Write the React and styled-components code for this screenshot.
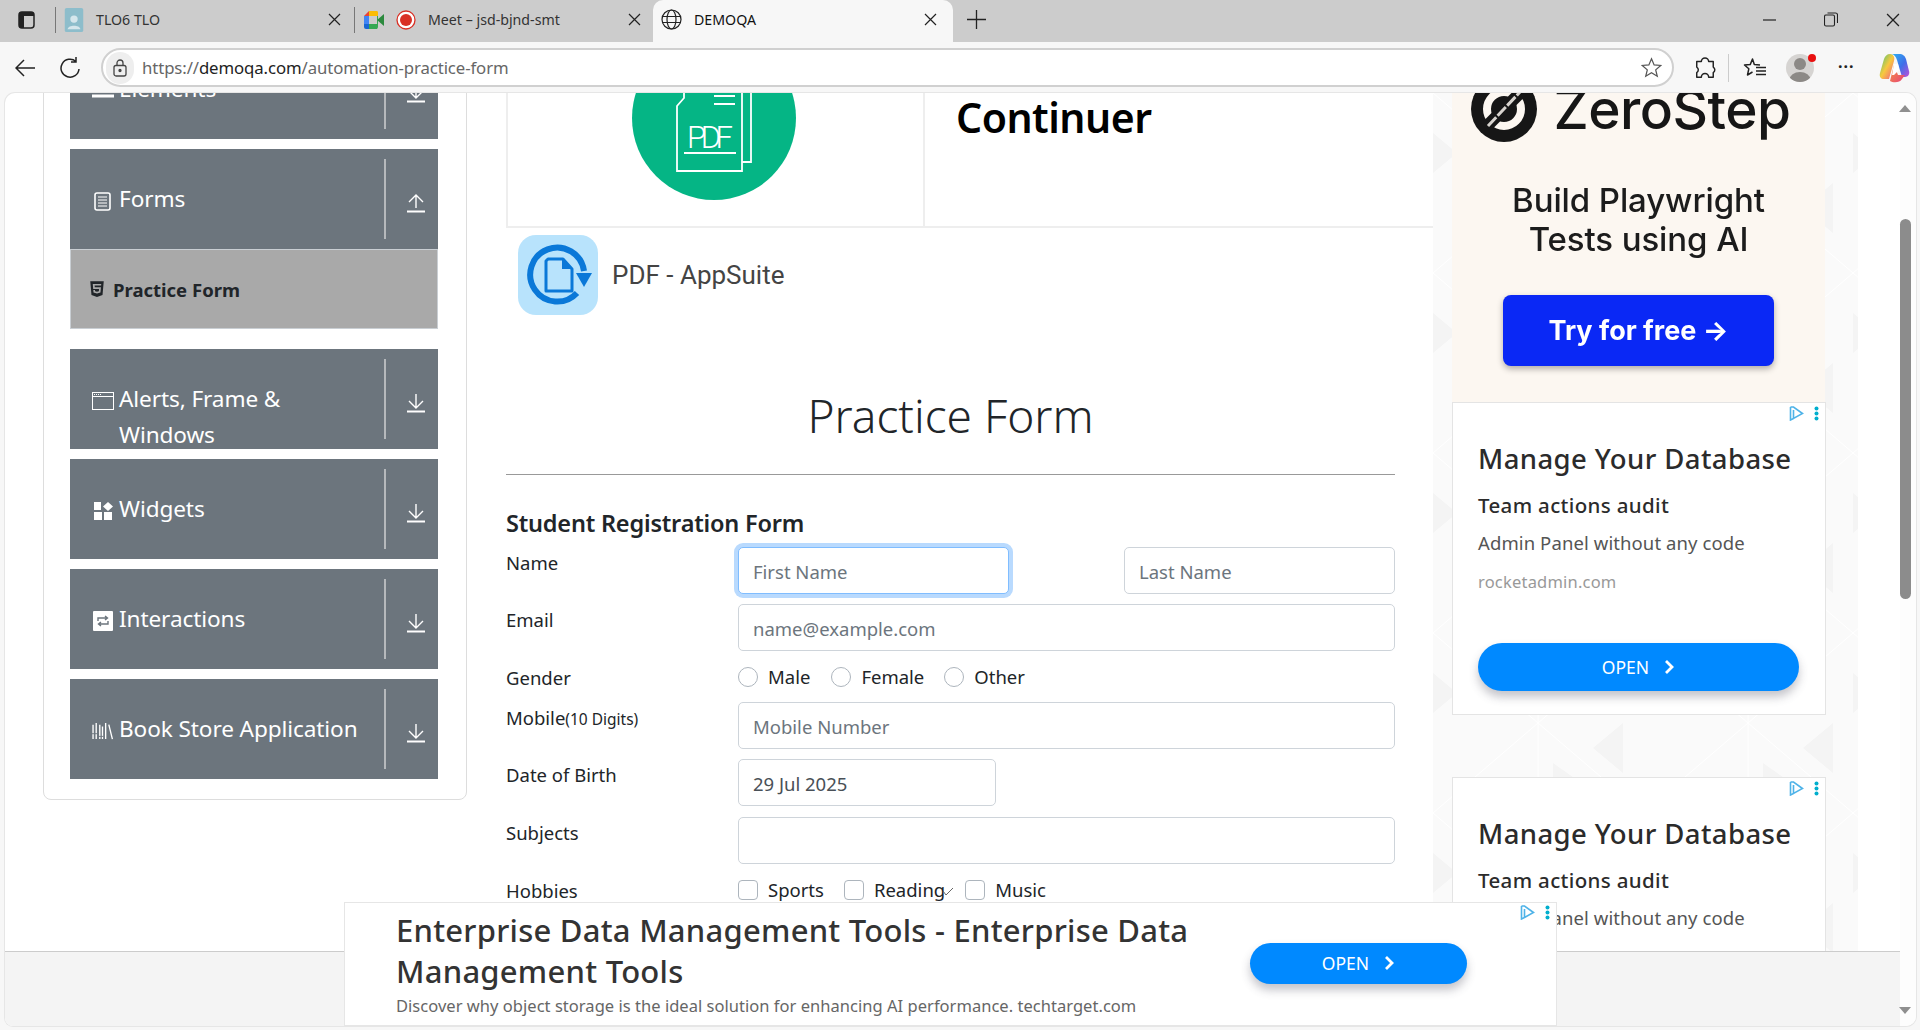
import React from 'react';
import styled, { createGlobalStyle } from 'styled-components';
import { FaHtml5 } from 'react-icons/fa';

const UI = '"Noto Sans", "Open Sans", sans-serif';
const AD = '"Noto Sans", Roboto, sans-serif';

const Global = createGlobalStyle`
  html, body { margin: 0; height: 100%; overflow: hidden; background: #f7f7f7; }
  * { box-sizing: border-box; }
  #root { height: 100%; }
  body { font-family: ${UI}; }
`;

const Window = styled.div`display:flex;flex-direction:column;width:1920px;height:1030px;background:#f7f7f7;`;
const TabStrip = styled.div`height:42px;background:#ccc;display:flex;align-items:center;flex:none;`;
const Tab = styled.div`
  display:flex;align-items:center;height:42px;position:relative;font:14.2px ${UI};color:${p=>p.$active?'#111':'#333'};
  width:${p=>p.$w}px;padding:0 0 3px ${p=>p.$pl}px;flex:none;
  background:${p=>p.$active?'#f7f7f7':'transparent'};
  border-radius:${p=>p.$active?'10px 10px 0 0':'0'};
`;
const TabSep = styled.i`width:1px;height:26px;background:#777;flex:none;margin-bottom:3px;`;
const TabText = styled.span`margin-left:${p=>p.$ml}px;flex:1;white-space:nowrap;`;
const TabClose = styled.span`display:flex;flex:none;margin-right:${p=>p.$mr}px;`;
const StripIcon = styled.span`display:flex;flex:none;margin-left:${p=>p.$ml||0}px;margin-bottom:${p=>p.$mb||0}px;`;
const WinControls = styled.div`display:flex;margin-left:auto;align-items:center;gap:48px;padding:0 20px 3px 0;`;
const Toolbar = styled.div`height:51px;flex:none;display:flex;align-items:center;padding:0 11px 0 15px;`;
const NavIcon = styled.span`display:flex;flex:none;margin-right:${p=>p.$mr}px;`;
const Omnibox = styled.div`
  height:39px;width:1573px;border:2px solid #d0d0d0;border-radius:20px;background:#fff;display:flex;align-items:center;
  padding:0 10px 0 3px;flex:none;margin-right:20px;
`;
const LockPill = styled.span`width:28px;height:32px;border-radius:14px;background:#eee;display:flex;align-items:center;justify-content:center;flex:none;`;
const Url = styled.span`margin-left:8px;font:16.75px ${UI};color:#666;flex:1;letter-spacing:-.1px;white-space:nowrap;b{font-weight:400;color:#222;}`;
const ToolIcons = styled.div`display:flex;align-items:center;`;
const ToolSep = styled.i`width:1px;height:28px;background:#ccc;margin:0 14px 0 12px;`;
const Avatar = styled.span`width:28px;height:28px;margin:0 24px 0 19px;border-radius:50%;background:#d6d4d2;position:relative;overflow:hidden;display:block;`;
const AvatarWrap = styled.span`position:relative;display:flex;`;
const Dot = styled.i`position:absolute;top:0;left:41px;width:8px;height:8px;border-radius:50%;background:#e81010;`;
const More = styled.span`font:700 16px ${UI};color:#222;margin-right:24px;letter-spacing:1px;transform:translateY(-2px);`;

const Page = styled.div`
  flex:none;margin-left:5px;width:1911px;height:933px;background:#fff;border-radius:10px 10px 10px 8px;overflow:hidden;position:relative;
  box-shadow:0 0 0 1px #e6e6e6;
`;
const Scroll = styled.div`display:flex;align-items:flex-start;padding-left:38px;height:100%;`;

const Card = styled.nav`
  width:424px;flex:none;margin-top:-80px;padding:25px 28px 20px 26px;border:1px solid #ddd;border-radius:8px;background:#fff;
`;
const Item = styled.div`
  height:100px;background:#6c757d;display:flex;margin-bottom:${p=>p.$mb}px;overflow:hidden;color:#fff;
`;
const ItemLabel = styled.div`flex:1;display:flex;padding:32px 12px 0 21px;min-width:0;font:22.6px/36px ${UI};letter-spacing:-.1px;`;
const IconSlot = styled.span`width:23px;height:36px;flex:none;display:flex;align-items:center;justify-content:center;margin-right:5px;transform:translateY(2px);`;
const ItemDivider = styled.i`width:2px;height:80px;margin-top:10px;background:#b6b9bc;flex:none;`;
const ArrowBox = styled.span`width:52px;flex:none;display:flex;padding:44px 0 0 21px;`;
const SubItem = styled.div`
  height:80px;background:#a9a9a9;border:1px solid #c9ced3;display:flex;align-items:center;padding-left:17px;margin-bottom:20px;
  font:700 18.5px ${UI};color:#212529;gap:7px;
`;

const Middle = styled.main`width:928px;flex:none;margin-left:38px;`;
const AdTable = styled.div`height:135px;display:grid;grid-template-columns:417px 1fr;border-left:2px solid #eee;border-bottom:2px solid #eee;margin-left:1px;overflow:hidden;`;
const AdImageCell = styled.div`border-right:2px solid #eee;display:flex;justify-content:center;`;
const Continuer = styled.div`font:600 41px/48px ${UI};color:#000;padding-left:31px;letter-spacing:-.5px;`;
const AppRow = styled.div`display:flex;align-items:center;margin:7px 0 0 13px;gap:14px;font:26px Roboto, sans-serif;color:#444;`;
const FormWrap = styled.section`width:889px;margin-left:1px;`;
const Title = styled.h1`margin:65px 0 0;text-align:center;font:300 46px/70px ${UI};color:#212529;height:95px;border-bottom:1px solid #999;`;
const SubTitle = styled.h2`margin:30px 0 0;font:600 23.5px/36px ${UI};color:#212529;letter-spacing:-.2px;height:42px;`;
const Row = styled.div`display:grid;grid-template-columns:232px 1fr;margin-bottom:${p=>p.$mb ?? 10}px;min-height:${p=>p.$h||47}px;`;
const Label = styled.label`font:18.5px/24px ${UI};color:#212529;padding-top:${p=>p.$pt ?? 4}px;white-space:nowrap;small{font-size:15.5px;}`;
const Fields = styled.div`display:flex;justify-content:space-between;`;
const Input = styled.input`
  display:block;height:47px;width:${p=>p.$w||'100%'};padding:2px 14px 0;border:1px solid ${p=>p.$focus?'#80bdff':'#ced4da'};border-radius:5px;
  font:18.5px ${UI};color:#495057;background:#fff;outline:none;
  box-shadow:${p=>p.$focus?'0 0 0 4px #b9dafe':'none'};
  &::placeholder{color:#6c757d;opacity:1;}
`;
const Choices = styled.div`display:flex;align-items:center;`;
const Choice = styled.label`display:flex;align-items:center;font:18.5px/24px ${UI};color:#212529;margin-right:${p=>p.$mr}px;gap:10px;white-space:nowrap;`;
const Mark = styled.input`
  appearance:none;margin:0;width:20px;height:20px;background:#fff;border:1px solid #adb5bd;flex:none;
  border-radius:${p=>p.type==='radio'?'50%':'4px'};
`;
const Tick = styled.svg`margin:4px 0 0 -13px;position:relative;`;

const Right = styled.aside`
  width:425px;flex:none;margin-left:0;padding:0 33px 0 19px;height:100%;background-color:#fafafa;
  background-image:url("data:image/svg+xml,%3Csvg xmlns='http://www.w3.org/2000/svg' width='210' height='180'%3E%3Cg fill='%23f4f4f4'%3E%3Cpath d='M0 40l24 20-24 20zM70 10l40 30H70zM190 90l-30 25 30 25zM120 130l34 24-34 24z'/%3E%3C/g%3E%3Cg stroke='%23fff' fill='none'%3E%3Cpath d='M0 0l105 90L210 0M0 180l105-90 105 90M105 0v180'/%3E%3C/g%3E%3C/svg%3E");
`;
const Promo = styled.div`
  height:309px;background:#fcf7f1;display:flex;flex-direction:column;align-items:center;overflow:hidden;font-family:Inter,sans-serif;color:#1c1c1c;filter:blur(.35px);
`;
const PromoLogo = styled.div`display:flex;align-items:center;height:50px;margin:-9px 15px 0 0;gap:16px;font:500 55px/60px Inter,sans-serif;color:#161616;letter-spacing:-.5px;`;
const PromoText = styled.div`margin-top:47px;font:500 33px/39px Inter,sans-serif;text-align:center;letter-spacing:-.1px;`;
const PromoBtn = styled.div`
  margin-top:36px;width:271px;height:71px;border-radius:8px;background:#0a28f5;color:#fff;font:700 27px/71px Inter,sans-serif;text-align:center;
  box-shadow:0 3px 6px rgba(0,0,0,.3);
`;
const AdBox = styled.div`
  position:relative;height:${p=>p.$h}px;width:374px;background:#fff;border:1px solid #e4e4e4;padding:38px 26px 0 25px;margin-bottom:${p=>p.$mb}px;overflow:hidden;
`;
const AdMark = styled.span`position:absolute;top:${p=>p.$top ?? 3}px;right:6px;display:flex;gap:10px;`;
const AdTitle = styled.div`font:500 27.5px/36px ${AD};color:#2b2b2b;white-space:nowrap;letter-spacing:.4px;`;
const AdSub = styled.div`font:500 20.5px/28px ${AD};color:#2b2b2b;margin-top:14px;letter-spacing:.35px;`;
const AdBody = styled.div`font:18.5px/28px ${AD};color:#555;margin-top:10px;letter-spacing:.1px;white-space:nowrap;`;
const AdLink = styled.div`font:16.5px/24px ${AD};color:#999;margin-top:13px;letter-spacing:.2px;`;
const OpenBtn = styled.div`
  width:${p=>p.$w}px;height:${p=>p.$h}px;border-radius:24px;background:#0089ff;color:#fff;display:flex;align-items:center;justify-content:center;gap:15px;
  font:17.5px ${AD};box-shadow:0 6px 10px rgba(60,60,80,.3);flex:none;margin-top:${p=>p.$mt ?? 0}px;
`;
const TrackBar = styled.div`position:absolute;right:0;top:0;bottom:0;width:16px;background:#fdfdfd;display:flex;flex-direction:column;align-items:center;`;
const Thumb = styled.i`display:block;width:11px;height:380px;margin:126px 5px 0 0;border-radius:6px;background:#8c8c8c;`;
const UpArrow = styled.i`position:absolute;top:12px;left:-1px;border:6.500px solid transparent;border-top:0;border-bottom:7px solid #8f8f8f;`;
const DownArrow = styled.i`position:absolute;bottom:12px;left:-1px;border:6.500px solid transparent;border-bottom:0;border-top:7px solid #8f8f8f;`;
const FooterBar = styled.div`position:absolute;left:0;right:10px;bottom:0;height:75px;background:#f4f4f4;border-top:1px solid #ccc;`;
const StickyAd = styled.div`
  position:absolute;left:339px;bottom:0;width:1213px;height:124px;background:#fff;border:1px solid #e6e6e6;display:flex;align-items:center;padding:0 89px 0 51px;
`;
const StickyText = styled.div`flex:1;min-width:0;margin-top:-2px;`;
const StickyTitle = styled.div`font:500 31px/41px ${AD};color:#333;letter-spacing:.25px;width:810px;`;
const StickyDesc = styled.div`font:16.5px/22px ${AD};color:#666;margin-top:3px;white-space:nowrap;letter-spacing:.03px;`;

const X = ({s=13,c='#222'}) => <svg width={s} height={s} viewBox="0 0 13 13"><path d="M1 1l11 11M12 1L1 12" stroke={c} strokeWidth="1.2" fill="none"/></svg>;
const Chevron = () => <svg width="11" height="16" viewBox="0 0 11 16"><path d="M2 2l6 6-6 6" stroke="#fff" strokeWidth="2.8" fill="none"/></svg>;
const AdChoices = () => (
  <>
    <svg width="15" height="15" viewBox="0 0 15 15"><path d="M1.500 1v13l3-1.500M1.500 1h3l9 6.500-9 5V4" stroke="#4fb3e8" strokeWidth="1.600" fill="none"/></svg>
    <svg width="5" height="15" viewBox="0 0 5 15"><g fill="#00aecd"><circle cx="2.500" cy="2.500" r="2"/><circle cx="2.500" cy="7.500" r="2"/><circle cx="2.500" cy="12.500" r="2"/></g></svg>
  </>
);
const ArrowDown = () => <svg width="18" height="20" viewBox="0 0 18 20"><path d="M9 1v13M2 8l7 7 7-7" stroke="#fff" strokeWidth="1.400" fill="none"/><path d="M0 18.500h18" stroke="#fff" strokeWidth="2"/></svg>;
const ArrowUp = () => <svg width="18" height="20" viewBox="0 0 18 20"><path d="M9 15V2M2 9l7-7 7 7" stroke="#fff" strokeWidth="1.400" fill="none"/><path d="M0 18.500h18" stroke="#fff" strokeWidth="2"/></svg>;

const icons = {
  elements: <svg width="22" height="18" viewBox="0 0 22 18"><path d="M0 14h22" stroke="#fff" strokeWidth="3"/></svg>,
  forms: <svg width="17" height="19" viewBox="0 0 17 19"><rect x="1" y="1" width="15" height="17" rx="2" fill="none" stroke="#fff" strokeWidth="1.600"/><path d="M4 5h9M4 8h9M4 11h9M4 14h9" stroke="#fff"/></svg>,
  alerts: <svg width="22" height="18" viewBox="0 0 22 18"><rect x=".5" y=".5" width="21" height="17" fill="none" stroke="#fff"/><path d="M1 4.500h20" stroke="#fff"/><path d="M2 2.500h1M4 2.500h1M6 2.500h1M8 2.500h1" stroke="#fff"/></svg>,
  widgets: <svg width="20" height="18" viewBox="0 0 20 18"><path d="M1 0h7v8H1zM1 10h8v8H1zM11 10h8v8h-8zM15 0l5 4.500-5 4.500-5-4.500z" fill="#fff"/></svg>,
  interactions: <svg width="20" height="20" viewBox="0 0 20 20"><rect width="20" height="20" rx="1" fill="#fff"/><path d="M5 10V7h9M12 5l2.500 2L12 9M15 10v3H6M8 11l-2.500 2L8 15" stroke="#6c757d" strokeWidth="1.400" fill="none"/></svg>,
  books: <svg width="23" height="18" viewBox="0 0 24 20"><path d="M1.500 3v16M5 1v18M9 3v16M12 5v14M15.500 1v18M19 3l4 16" stroke="#fff" strokeWidth="1.500" fill="none"/><path d="M0 13h6M7 16h6" stroke="#6c757d"/></svg>,
};

const Meet = () => (
  <svg width="20" height="18" viewBox="0 0 20 18">
    <path d="M5 0H13V5H5z" fill="#fbbc05"/>
    <path d="M5 0L0 5H5z" fill="#ea4335"/>
    <path d="M0 5H5V13H0z" fill="#4285f4"/>
    <path d="M0 13H5V18H2a2 2 0 0 1-2-2z" fill="#1967d2"/>
    <path d="M5 13H13V18H5z" fill="#34a853"/>
    <path d="M13 0a1.500 1.500 0 0 1 1 1.500V5h-1z" fill="#fbbc05"/>
    <path d="M13 5h1v11a2 2 0 0 1-2 2h-1v-5h2z" fill="#34a853"/>
    <path d="M13 9l7-6v12z" fill="#2b8a3e"/>
  </svg>
);
const Rec = () => <svg width="20" height="20" viewBox="0 0 20 20"><circle cx="10" cy="10" r="9" fill="#fff" stroke="#d93025" strokeWidth="1.300"/><circle cx="10" cy="10" r="6" fill="#d93025"/></svg>;
const Globe = () => <svg width="21" height="21" viewBox="0 0 21 21" fill="none" stroke="#222" strokeWidth="1.200"><circle cx="10.500" cy="10.500" r="9.500"/><ellipse cx="10.500" cy="10.500" rx="4.500" ry="9.500"/><path d="M1.500 7.500h18M1.500 13.500h18"/></svg>;
const Contact = () => <svg width="20" height="24" viewBox="0 0 20 26"><rect width="20" height="26" rx="2" fill="#8dbdcb"/><circle cx="10" cy="12" r="4" fill="#d5e6ec"/><path d="M3 23c1-5 13-5 14 0z" fill="#d5e6ec"/></svg>;

const PdfCircle = () => (
  <svg width="164" height="164" viewBox="0 0 164 164" style={{margin:'-57px 0 0 -3px',flex:'none'}}>
    <circle cx="82" cy="82" r="82" fill="#05b585"/>
    <g fill="none" stroke="#fff" strokeWidth="1.800">
      <path d="M52 40v22l-7 8v65h65V40"/>
      <path d="M110 126h9V40"/>
      <path d="M82 60h21M82 68h21"/>
      <path d="M52 117h52" strokeWidth="2.200"/>
    </g>
    <text x="55" y="112" fill="#fff" fontFamily="Roboto, sans-serif" fontSize="31" fontWeight="300" textLength="46">PDF</text>
  </svg>
);
const AppSuite = () => (
  <svg width="80" height="80" viewBox="0 0 80 80" style={{flex:'none'}}>
    <rect width="80" height="80" rx="18" fill="#b8e3fc"/>
    <path d="M59 58A27 27 0 1 1 66 36" fill="none" stroke="#0a78d8" strokeWidth="6"/>
    <path d="M58 38h16l-8 14z" fill="#0a78d8"/>
    <path d="M30 24h15l9 10v22H28V26z" fill="none" stroke="#0a78d8" strokeWidth="3" strokeLinejoin="round"/>
    <path d="M44 24v10h10z" fill="#0a78d8"/>
  </svg>
);
const ZeroLogo = () => (
  <svg width="66" height="66" viewBox="0 0 66 66" style={{flex:'none'}}>
    <circle cx="33" cy="33" r="33" fill="#161616"/>
    <circle cx="33" cy="33" r="17" fill="none" stroke="#fcf7f1" strokeWidth="8"/>
    <path d="M14 52L52 14" stroke="#161616" strokeWidth="12"/>
    <path d="M17 50L49 16" stroke="#d8d4cf" strokeWidth="3" strokeDasharray="12 2"/>
  </svg>
);
const Copilot = () => (
  <svg width="31" height="30" viewBox="0 0 31 30">
    <defs>
      <linearGradient id="cpa" x1="0" y1="0" x2="1" y2="1"><stop offset="0" stopColor="#2fb5f2"/><stop offset=".55" stopColor="#3f6fe8"/><stop offset="1" stopColor="#c04fd8"/></linearGradient>
      <linearGradient id="cpb" x1="0" y1="0" x2="1" y2="1"><stop offset="0" stopColor="#3fc47a"/><stop offset=".5" stopColor="#f7c93e"/><stop offset="1" stopColor="#f0558a"/></linearGradient>
      <linearGradient id="cpc" x1="0" y1="0" x2="1" y2="1"><stop offset="0" stopColor="#f59a3c"/><stop offset="1" stopColor="#e8407a"/></linearGradient>
    </defs>
    <path d="M12 1h8c4 0 6 2 7 5l3 12c1 3-1 6-4 6h-3l-5-17c-1-3-3-6-6-6z" fill="url(#cpa)"/>
    <path d="M11 1c-3 0-5 2-6 5L1 20c-1 4 1 6 4 6h5l5-18c1-3 0-7-4-7z" fill="url(#cpb)"/>
    <path d="M15 12l-4 16c3 2 10 2 12-2l3-4h-7z" fill="url(#cpc)"/>
    <path d="M15 11h4l1 6-5 5h-2z" fill="#fff"/>
  </svg>
);

const navItems = [
  { key:'elements', label:'Elements', icon:icons.elements, arrow:'down', mb:10 },
  { key:'forms', label:'Forms', icon:icons.forms, arrow:'up', mb:0 },
  { key:'alerts', label:'Alerts, Frame & Windows', icon:icons.alerts, arrow:'down', mb:10 },
  { key:'widgets', label:'Widgets', icon:icons.widgets, arrow:'down', mb:10 },
  { key:'interactions', label:'Interactions', icon:icons.interactions, arrow:'down', mb:10 },
  { key:'books', label:'Book Store Application', icon:icons.books, arrow:'down', mb:0 },
];

const DbAd = ({ h, mb }) => (
  <AdBox $h={h} $mb={mb}>
    <AdMark><AdChoices /></AdMark>
    <AdTitle>Manage Your Database</AdTitle>
    <AdSub>Team actions audit</AdSub>
    <AdBody>Admin Panel without any code</AdBody>
    <AdLink>rocketadmin.com</AdLink>
    <OpenBtn $w={321} $h={48} $mt={49}>OPEN <Chevron /></OpenBtn>
  </AdBox>
);

export default function App() {
  return (
    <Window>
      <Global />
      <TabStrip>
        <StripIcon $ml={18} $mb={3}>
          <svg width="17" height="18" viewBox="0 0 17 18"><rect x="1" y="1" width="15" height="16" rx="3" fill="none" stroke="#222" strokeWidth="1.500"/><path d="M1 5h15V3a2 2 0 0 0-2-2H3a2 2 0 0 0-2 2zM1 5h5v12H3a2 2 0 0 1-2-2z" fill="#222"/></svg>
        </StripIcon>
        <StripIcon $ml={20}><TabSep /></StripIcon>
        <Tab $w={298} $pl={8}><Contact /><TabText $ml={12}>TLO6 TLO</TabText><TabClose $mr={13}><X /></TabClose></Tab>
        <TabSep />
        <Tab $w={298} $pl={9}><Meet /><StripIcon $ml={12}><Rec /></StripIcon><TabText $ml={12}>Meet – jsd-bjnd-smt</TabText><TabClose $mr={12}><X /></TabClose></Tab>
        <Tab $active $w={300} $pl={8}><Globe /><TabText $ml={12}>DEMOQA</TabText><TabClose $mr={16}><X /></TabClose></Tab>
        <StripIcon $ml={14} $mb={3}>
          <svg width="19" height="19" viewBox="0 0 19 19"><path d="M9.500 0v19M0 9.500h19" stroke="#222" strokeWidth="1.300"/></svg>
        </StripIcon>
        <WinControls>
          <svg width="13" height="13" viewBox="0 0 13 13"><path d="M0 7h13" stroke="#222" strokeWidth="1.200"/></svg>
          <svg width="14" height="15" viewBox="0 0 14 15" fill="none" stroke="#222" strokeWidth="1.100"><rect x=".5" y="3" width="10" height="11" rx="1.500"/><path d="M3.500 1h8a2 2 0 0 1 2 2v8"/></svg>
          <X s={14} />
        </WinControls>
      </TabStrip>
      <Toolbar>
        <NavIcon $mr={25}>
          <svg width="20" height="20" viewBox="0 0 20 20"><path d="M20 10H1M9 2l-8 8 8 8" stroke="#222" strokeWidth="1.500" fill="none"/></svg>
        </NavIcon>
        <NavIcon $mr={21}>
          <svg width="20" height="22" viewBox="0 0 20 22"><path d="M16 4.500A9 9 0 1 0 19 12M16 0v5h-5" stroke="#222" strokeWidth="1.500" fill="none"/></svg>
        </NavIcon>
        <Omnibox>
          <LockPill>
            <svg width="14" height="18" viewBox="0 0 14 18" fill="none" stroke="#444" strokeWidth="1.300"><rect x="1" y="6.500" width="12" height="10.500" rx="2"/><path d="M4 6.500V4a3 3 0 0 1 6 0v2.500"/><circle cx="7" cy="11.500" r="1" fill="#444"/></svg>
          </LockPill>
          <Url>https://<b>demoqa.com</b>/automation-practice-form</Url>
          <svg width="21" height="21" viewBox="0 0 24 24" fill="none" stroke="#555" strokeWidth="1.400"><path d="M12 2l3 7 7.500.7-5.700 5 1.800 7.300-6.600-4-6.600 4 1.800-7.300-5.700-5L9 9z"/></svg>
        </Omnibox>
        <ToolIcons>
          <svg width="22" height="24" viewBox="0 0 24 26" fill="none" stroke="#222" strokeWidth="1.600" strokeLinejoin="round"><path d="M8 6a4 4 0 0 1 8 0h5v6a3.500 3.500 0 0 1 0 6v5h-5a4 4 0 0 0-8 0H3v-5a3.500 3.500 0 0 0 0-6V6z"/></svg>
          <ToolSep />
          <svg width="24" height="22" viewBox="0 0 24 22" fill="none" stroke="#222" strokeWidth="1.500" strokeLinejoin="round"><path d="M17 8l-5.700-.4L9.500 2 7.200 7.600 1.500 8l4.300 3.800L4.500 18l5-3"/><path d="M13 10.500h10M13 14h10M13 17.500h10" strokeWidth="1.300"/></svg>
          <AvatarWrap>
            <Avatar>
              <svg width="28" height="28" viewBox="0 0 28 28"><circle cx="14" cy="10" r="6" fill="#8c8986"/><ellipse cx="14" cy="26" rx="10.500" ry="8" fill="#8c8986"/></svg>
            </Avatar>
            <Dot />
          </AvatarWrap>
          <More>···</More>
          <Copilot />
        </ToolIcons>
      </Toolbar>
      <Page>
        <Scroll>
          <Card>
            {navItems.map((it) => (
              <React.Fragment key={it.key}>
                <Item $mb={it.mb}>
                  <ItemLabel>
                    <IconSlot>{it.icon}</IconSlot>
                    <span>{it.label}</span>
                  </ItemLabel>
                  <ItemDivider />
                  <ArrowBox>{it.arrow === 'up' ? <ArrowUp /> : <ArrowDown />}</ArrowBox>
                </Item>
                {it.key === 'forms' && (
                  <SubItem><FaHtml5 size={18} color="#212529" />Practice Form</SubItem>
                )}
              </React.Fragment>
            ))}
          </Card>
          <Middle>
            <AdTable>
              <AdImageCell><PdfCircle /></AdImageCell>
              <Continuer>Continuer</Continuer>
            </AdTable>
            <AppRow><AppSuite />PDF - AppSuite</AppRow>
            <FormWrap>
              <Title>Practice Form</Title>
              <SubTitle>Student Registration Form</SubTitle>
              <Row>
                <Label>Name</Label>
                <Fields>
                  <Input $focus $w="271px" placeholder="First Name" />
                  <Input $w="271px" placeholder="Last Name" />
                </Fields>
              </Row>
              <Row>
                <Label>Email</Label>
                <Input placeholder="name@example.com" />
              </Row>
              <Row $h={31}>
                <Label $pt={5}>Gender</Label>
                <Choices>
                  <Choice $mr={21}><Mark type="radio" name="g" />Male</Choice>
                  <Choice $mr={20}><Mark type="radio" name="g" />Female</Choice>
                  <Choice $mr={0}><Mark type="radio" name="g" />Other</Choice>
                </Choices>
              </Row>
              <Row>
                <Label>Mobile<small>(10 Digits)</small></Label>
                <Input placeholder="Mobile Number" />
              </Row>
              <Row $mb={11}>
                <Label>Date of Birth</Label>
                <Input $w="258px" defaultValue="29 Jul 2025" />
              </Row>
              <Row>
                <Label>Subjects</Label>
                <Input />
              </Row>
              <Row $h={31} $mb={0}>
                <Label $pt={5}>Hobbies</Label>
                <Choices>
                  <Choice $mr={20}><Mark type="checkbox" />Sports</Choice>
                  <Choice $mr={11}><Mark type="checkbox" />Reading<Tick width="12" height="10" viewBox="0 0 12 10"><path d="M1 4l3 4 7-7" stroke="#666" fill="none"/></Tick></Choice>
                  <Choice $mr={0}><Mark type="checkbox" />Music</Choice>
                </Choices>
              </Row>
            </FormWrap>
          </Middle>
          <Right>
            <Promo>
              <PromoLogo><ZeroLogo />ZeroStep</PromoLogo>
              <PromoText>Build Playwright<br />Tests using AI</PromoText>
              <PromoBtn>Try for free →</PromoBtn>
            </Promo>
            <DbAd h={313} mb={62} />
            <DbAd h={313} mb={0} />
          </Right>
        </Scroll>
        <FooterBar />
        <StickyAd>
          <AdMark $top={2}><AdChoices /></AdMark>
          <StickyText>
            <StickyTitle>Enterprise Data Management Tools - Enterprise Data Management Tools</StickyTitle>
            <StickyDesc>Discover why object storage is the ideal solution for enhancing AI performance. techtarget.com</StickyDesc>
          </StickyText>
          <OpenBtn $w={217} $h={41} $mt={-2}>OPEN <Chevron /></OpenBtn>
        </StickyAd>
        <TrackBar>
          <UpArrow />
          <Thumb />
          <DownArrow />
        </TrackBar>
      </Page>
    </Window>
  );
}
